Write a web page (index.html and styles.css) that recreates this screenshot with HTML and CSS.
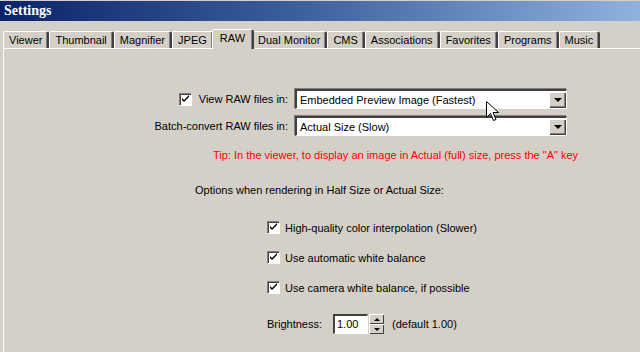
FILE: index.html
```html
<!DOCTYPE html>
<html lang="en">
<head>
    <meta charset="UTF-8">
    <title>Settings</title>
    <link rel="stylesheet" href="styles.css">
</head>
<body>
    <div class="titlebar">Settings</div>

    <div class="tabs">
        <div class="tab">Viewer</div>
        <div class="tab">Thumbnail</div>
        <div class="tab">Magnifier</div>
        <div class="tab">JPEG</div>
        <div class="tab active">RAW</div>
        <div class="tab">Dual Monitor</div>
        <div class="tab">CMS</div>
        <div class="tab">Associations</div>
        <div class="tab">Favorites</div>
        <div class="tab">Programs</div>
        <div class="tab">Music</div>
    </div>

    <div class="panel">
        <div class="form">
            <div class="label">
                <span class="check"><svg width="9" height="9" viewBox="0 0 9 9"><path d="M1 3v2l2 2 5-5V0L3 5z" fill="#000"/></svg></span>
                <span>View RAW files in:</span>
            </div>
            <div class="combo">
                <span class="combo-text">Embedded Preview Image (Fastest)</span>
                <span class="combo-btn"><i></i></span>
            </div>
            <div class="label">Batch-convert RAW files in:</div>
            <div class="combo">
                <span class="combo-text">Actual Size (Slow)</span>
                <span class="combo-btn"><i></i></span>
            </div>
        </div>

        <div class="tip">Tip: In the viewer, to display an image in Actual (full) size, press the "A" key</div>

        <div class="options-title">Options when rendering in Half Size or Actual Size:</div>

        <div class="options">
            <div class="option">
                <span class="check"><svg width="9" height="9" viewBox="0 0 9 9"><path d="M1 3v2l2 2 5-5V0L3 5z" fill="#000"/></svg></span>
                <span>High-quality color interpolation (Slower)</span>
            </div>
            <div class="option">
                <span class="check"><svg width="9" height="9" viewBox="0 0 9 9"><path d="M1 3v2l2 2 5-5V0L3 5z" fill="#000"/></svg></span>
                <span>Use automatic white balance</span>
            </div>
            <div class="option">
                <span class="check"><svg width="9" height="9" viewBox="0 0 9 9"><path d="M1 3v2l2 2 5-5V0L3 5z" fill="#000"/></svg></span>
                <span>Use camera white balance, if possible</span>
            </div>
            <div class="option brightness">
                <span class="bright-label">Brightness:</span>
                <span class="num">1.00</span>
                <span class="spin">
                    <span class="spin-btn"><i class="up"></i></span>
                    <span class="spin-btn"><i class="down"></i></span>
                </span>
                <span class="hint">(default 1.00)</span>
            </div>
        </div>
    </div>

    <!-- mouse pointer -->
    <svg class="cursor" width="13" height="21" viewBox="0 0 13 21">
        <path d="M0.5 0.5v16l4-4 3 7 2.5-1-3-7h5.5z" fill="#fff" stroke="#000" stroke-width="1"/>
    </svg>
</body>
</html>
```

FILE: styles.css
```css
body {
    margin: 0;
    background: #d4d0c8;
    font-family: 'Liberation Sans', Arial, sans-serif;
    font-size: 11px;
    color: #000;
    width: 640px;
    height: 352px;
    overflow: hidden;
    position: relative;
}
.titlebar {
    margin-top: 1px;
    height: 20px;
    line-height: 20px;
    padding-left: 4px;
    background: linear-gradient(to right, #0a246a, #3a5d9c 45%, #8fb2de);
    color: white;
    font-family: 'Liberation Serif', serif;
    font-weight: bold;
    font-size: 14px;
}
/* Tabs */
.tabs {
    display: flex;
    align-items: flex-end;
    margin-top: 7px;
    padding-left: 3px;
    height: 20px;
}
.tab {
    height: 16px;
    line-height: 16px;
    padding: 0 5px;
    border-top: 1px solid #fff;
    border-left: 1px solid #fff;
    border-right: 2px solid #404040;
    border-radius: 2px 3px 0 0;
    box-shadow: inset -1px 0 0 #808080;
}
.tab.active {
    height: 19px;
    margin: 0 -2px -1px -2px;
    padding: 0 7px;
    position: relative;
    z-index: 1;
    background: #d4d0c8;
}
/* Panel */
.panel {
    box-sizing: border-box;
    margin-left: 3px;
    border-top: 1px solid #fff;
    border-left: 1px solid #fff;
    height: 304px;
    padding-top: 40px;
}
.form {
    display: grid;
    grid-template-columns: 284px 272px;
    column-gap: 7px;
    row-gap: 7px;
}
.label {
    display: flex;
    align-items: center;
    justify-content: flex-end;
    gap: 7px;
}
.combo {
    height: 17px;
    background: #fff;
    border-top: 2px solid #404040;
    border-left: 2px solid #404040;
    border-right: 1px solid #fff;
    border-bottom: 1px solid #fff;
    box-shadow: -1px -1px 0 #808080;
    display: flex;
    align-items: center;
}
.combo-text {
    flex: 1;
    padding-left: 3px;
}
.combo-btn {
    width: 16px;
    height: 15px;
    margin-right: 1px;
    background: #d4d0c8;
    border-top: 1px solid #fff;
    border-left: 1px solid #fff;
    box-shadow: 1px 1px 0 #404040, inset -1px -1px 0 #808080;
    display: flex;
    align-items: center;
    justify-content: center;
    box-sizing: border-box;
}
.combo-btn i {
    border-left: 4px solid transparent;
    border-right: 4px solid transparent;
    border-top: 4px solid #000;
}
.check {
    width: 9px;
    height: 9px;
    padding: 1px;
    background: #fff;
    border-top: 1px solid #808080;
    border-left: 1px solid #808080;
    border-right: 1px solid #fff;
    border-bottom: 1px solid #fff;
    box-shadow: inset 1px 1px 0 #404040;
    display: inline-flex;
}
.check svg {
    display: block;
}
.tip {
    color: #ff0000;
    margin: 13px 0 0 209px;
    line-height: 13px;
}
.options-title {
    margin: 22px 0 0 191px;
    line-height: 13px;
}
.options {
    margin: 24px 0 0 263px;
    display: flex;
    flex-direction: column;
    gap: 17px;
}
.option {
    display: flex;
    align-items: center;
    gap: 5px;
    height: 13px;
}
.brightness {
    margin-top: 2px;
    height: 22px;
    gap: 0;
}
.bright-label {
    width: 66px;
}
.num {
    width: 30px;
    height: 17px;
    line-height: 17px;
    padding-left: 2px;
    background: #fff;
    border-top: 2px solid #404040;
    border-left: 2px solid #404040;
    border-right: 1px solid #fff;
    border-bottom: 1px solid #fff;
}
.spin {
    display: flex;
    flex-direction: column;
    width: 15px;
    height: 20px;
    margin-left: 1px;
}
.spin-btn {
    flex: 1;
    background: #d4d0c8;
    border-top: 1px solid #fff;
    border-left: 1px solid #fff;
    box-shadow: inset -1px -1px 0 #404040;
    display: flex;
    align-items: center;
    justify-content: center;
}
.spin-btn i {
    border-left: 3px solid transparent;
    border-right: 3px solid transparent;
}
.spin-btn i.up {
    border-bottom: 3px solid #000;
}
.spin-btn i.down {
    border-top: 3px solid #000;
}
.hint {
    margin-left: 8px;
}
.cursor {
    position: absolute;
    left: 486px;
    top: 101px;
}
```
